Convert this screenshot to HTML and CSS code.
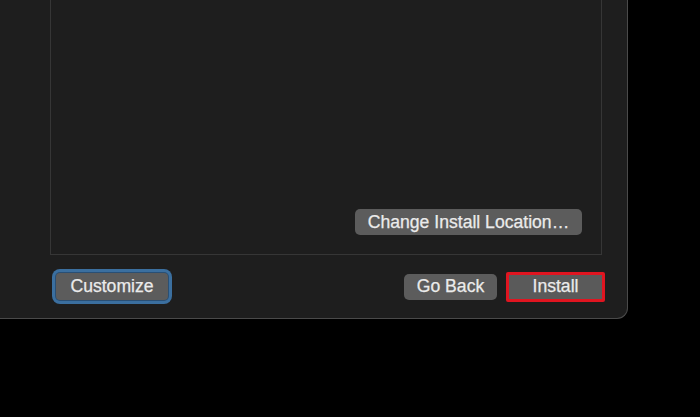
FILE: index.html
```html
<!DOCTYPE html>
<html lang="en">
<head>
<meta charset="utf-8">
<title>Installer</title>
<link rel="stylesheet" href="styles.css">
</head>
<body>
<div class="window">
  <div class="panel">
    <button class="btn btn-location" type="button">Change Install Location…</button>
  </div>
  <div class="footer">
    <button class="btn btn-customize" type="button">Customize</button>
    <div class="footer-right">
      <button class="btn btn-back" type="button">Go Back</button>
      <button class="btn btn-install" type="button">Install</button>
    </div>
  </div>
</div>
</body>
</html>
```

FILE: styles.css
```css
html, body {
  margin: 0;
  padding: 0;
  background: #000;
  width: 700px;
  height: 417px;
  overflow: hidden;
}

.window {
  box-sizing: border-box;
  width: 628px;
  height: 319px;
  background: #1e1e1e;
  border-right: 1px solid #4a4a4a;
  border-bottom: 1px solid #4a4a4a;
  border-bottom-right-radius: 11px;
  display: flex;
  flex-direction: column;
}

.panel {
  box-sizing: border-box;
  margin-left: 50px;
  width: 552px;
  height: 255px;
  border: 1px solid #363636;
  border-top: none;
  display: flex;
  justify-content: flex-end;
  align-items: flex-end;
  padding: 0 19px 19px 0;
}

.btn {
  box-sizing: border-box;
  font-family: "Liberation Sans", Arial, sans-serif;
  font-size: 17.6px;
  color: #ebebeb;
  background: #5c5c5c;
  border: none;
  border-radius: 5px;
  padding: 0;
  margin: 0;
  display: flex;
  align-items: center;
  justify-content: center;
  -webkit-text-stroke: 0.25px #ebebeb;
}

.btn-location {
  width: 227px;
  height: 26px;
}

.footer {
  flex: 1;
  display: flex;
  align-items: center;
  justify-content: space-between;
  padding: 0 22px 0 56px;
}

.btn-customize {
  width: 112px;
  height: 27px;
  border-radius: 4px;
  box-shadow: 0 0 0 1px #2a4f74, 0 0 0 4px #3b6f9f;
}

.footer-right {
  display: flex;
  align-items: center;
  gap: 9px;
}

.btn-back {
  width: 93px;
  height: 26px;
}

.btn-install {
  width: 99px;
  height: 30px;
  border: 3px solid #e01520;
  border-radius: 2px;
  background: #5a5a5a;
}
```
